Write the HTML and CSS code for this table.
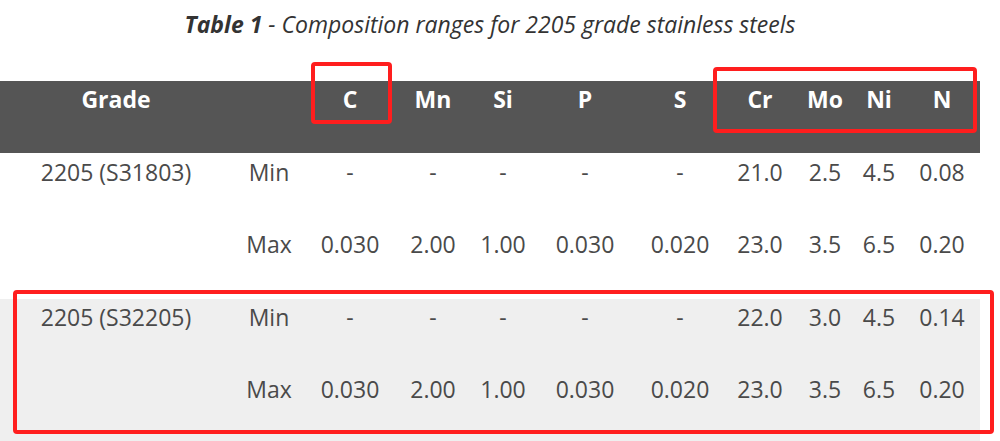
FILE: index.html
```html
<!DOCTYPE html>
<html>
<head>
<meta charset="utf-8">
<link rel="stylesheet" href="styles.css">
</head>
<body>
<div class="page">
  <div class="title"><b>Table 1</b> - Composition ranges for 2205 grade stainless steels</div>
  <div class="table">
    <div class="row head">
      <div class="cell">Grade</div>
      <div class="cell"></div>
      <div class="cell">C</div>
      <div class="cell">Mn</div>
      <div class="cell">Si</div>
      <div class="cell">P</div>
      <div class="cell">S</div>
      <div class="cell">Cr</div>
      <div class="cell">Mo</div>
      <div class="cell">Ni</div>
      <div class="cell">N</div>
    </div>
    <div class="row group">
      <div class="cell grade">2205 (S31803)</div>
      <div class="cell">Min</div>
      <div class="cell">-</div>
      <div class="cell">-</div>
      <div class="cell">-</div>
      <div class="cell">-</div>
      <div class="cell">-</div>
      <div class="cell">21.0</div>
      <div class="cell">2.5</div>
      <div class="cell">4.5</div>
      <div class="cell">0.08</div>
      <div class="cell">Max</div>
      <div class="cell">0.030</div>
      <div class="cell">2.00</div>
      <div class="cell">1.00</div>
      <div class="cell">0.030</div>
      <div class="cell">0.020</div>
      <div class="cell">23.0</div>
      <div class="cell">3.5</div>
      <div class="cell">6.5</div>
      <div class="cell">0.20</div>
    </div>
    <div class="row group alt">
      <div class="cell grade">2205 (S32205)</div>
      <div class="cell">Min</div>
      <div class="cell">-</div>
      <div class="cell">-</div>
      <div class="cell">-</div>
      <div class="cell">-</div>
      <div class="cell">-</div>
      <div class="cell">22.0</div>
      <div class="cell">3.0</div>
      <div class="cell">4.5</div>
      <div class="cell">0.14</div>
      <div class="cell">Max</div>
      <div class="cell">0.030</div>
      <div class="cell">2.00</div>
      <div class="cell">1.00</div>
      <div class="cell">0.030</div>
      <div class="cell">0.020</div>
      <div class="cell">23.0</div>
      <div class="cell">3.5</div>
      <div class="cell">6.5</div>
      <div class="cell">0.20</div>
    </div>
  </div>
  <div class="mark mark-c"></div>
  <div class="mark mark-alloy"></div>
  <div class="mark mark-row"></div>
</div>
</body>
</html>
```

FILE: styles.css
```css
html, body {
  margin: 0;
  padding: 0;
  background: #fff;
}

.page {
  position: relative;
  width: 1000px;
  height: 441px;
  overflow: hidden;
  font-family: "Open Sans", "Liberation Sans", sans-serif;
}

.title {
  width: 980px;
  height: 71px;
  padding-top: 10px;
  text-align: center;
  font-size: 23px;
  line-height: 28px;
  font-style: italic;
  color: #333;
}

.title b {
  font-weight: 700;
}

.table {
  width: 980px;
}

.row {
  display: grid;
  grid-template-columns: 232px 74px 88px 78px 62px 102px 88px 72px 58px 50px 76px;
  font-size: 23px;
  line-height: 33px;
}

.cell {
  text-align: center;
  white-space: nowrap;
}

.head {
  height: 72px;
  background: #555555;
  color: #fff;
  font-weight: 700;
}

.head .cell {
  padding-top: 2px;
}

.group {
  grid-template-rows: 72px 74px;
  color: #4a4a4a;
}

.group .cell {
  padding-top: 3px;
}

.group .grade {
  grid-row: span 2;
}

.alt {
  background: #efefef;
  grid-template-rows: 72px 80px;
}

.alt .cell {
  padding-top: 2px;
}

.mark {
  position: absolute;
  border: 4px solid #ff1e1e;
  border-radius: 4px;
  box-sizing: border-box;
}

.mark-c {
  left: 311px;
  top: 62px;
  width: 81px;
  height: 62px;
}

.mark-alloy {
  left: 713px;
  top: 67px;
  width: 264px;
  height: 66px;
}

.mark-row {
  left: 13px;
  top: 290px;
  width: 981px;
  height: 144px;
}
```
